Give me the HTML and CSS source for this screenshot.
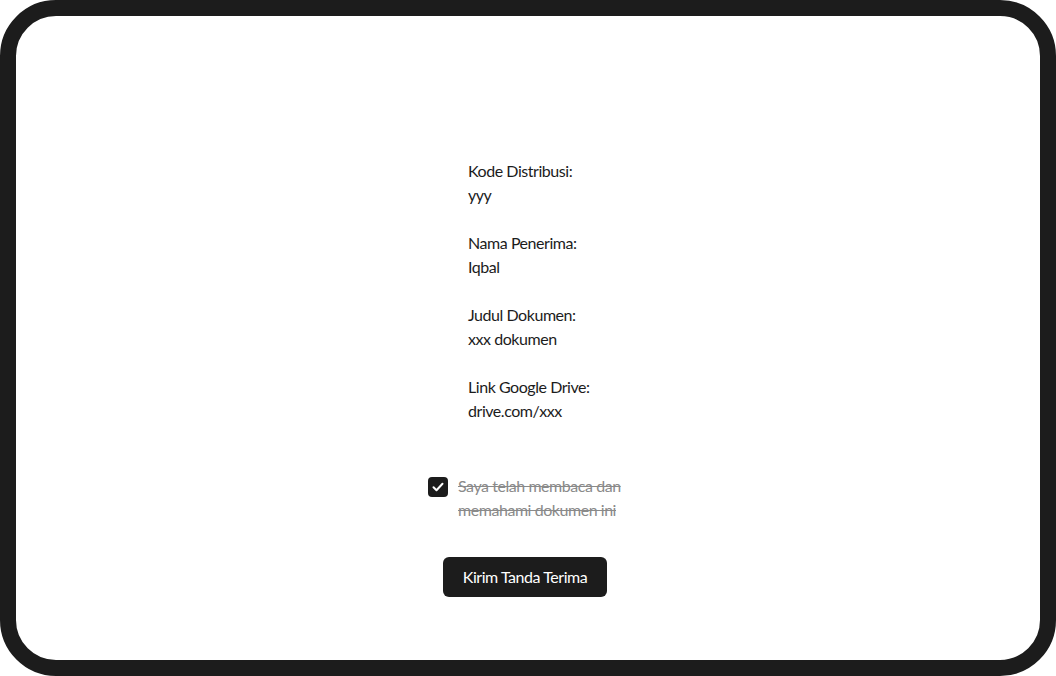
FILE: index.html
```html
<!DOCTYPE html>
<html lang="id">
<head>
<meta charset="utf-8">
<title>Tanda Terima</title>
<link rel="stylesheet" href="styles.css">
</head>
<body>
<div class="frame">
  <main class="screen">
    <section class="fields">
      <div class="field">
        <div class="label">Kode Distribusi:</div>
        <div class="value">yyy</div>
      </div>
      <div class="field">
        <div class="label">Nama Penerima:</div>
        <div class="value">Iqbal</div>
      </div>
      <div class="field">
        <div class="label">Judul Dokumen:</div>
        <div class="value">xxx dokumen</div>
      </div>
      <div class="field">
        <div class="label">Link Google Drive:</div>
        <div class="value">drive.com/xxx</div>
      </div>
    </section>
    <label class="agree">
      <span class="box"><svg viewBox="0 0 20 20" width="20" height="20"><path d="M5.5 10.3l3 3 6-6.5" fill="none" stroke="#fff" stroke-width="2" stroke-linecap="round" stroke-linejoin="round"/></svg></span>
      <span class="agree-text">Saya telah membaca dan memahami dokumen ini</span>
    </label>
    <button class="submit" type="button">Kirim Tanda Terima</button>
  </main>
</div>
</body>
</html>
```
FILE: styles.css
```css
* { box-sizing: border-box; }
html, body { margin: 0; padding: 0; background: #fff; }
body {
  font-family: "Lato", "Noto Sans", sans-serif;
  font-size: 16px;
  line-height: 24px;
  letter-spacing: -0.45px;
  color: #1c1c1c;
}
.frame {
  width: 1056px;
  height: 676px;
  border: 16px solid #1c1c1c;
  border-radius: 56px;
  background: #fff;
  overflow: hidden;
}
.screen {
  height: 100%;
  display: flex;
  flex-direction: column;
  align-items: center;
  padding-top: 143px;
}
.fields {
  display: flex;
  flex-direction: column;
  gap: 24px;
  width: 120px;
}
.label, .value { white-space: nowrap; }
.agree {
  margin-top: 51px;
  display: flex;
  gap: 10px;
  width: 200px;
  align-items: flex-start;
}
.box {
  flex: none;
  width: 20px;
  height: 20px;
  margin-top: 3px;
  border-radius: 4px;
  background: #1c1c1c;
  display: flex;
}
.agree-text {
  width: 170px;
  color: #8a8a8a;
  text-decoration: line-through;
}
.submit {
  margin-top: 35px;
  margin-right: 6px;
  height: 40px;
  width: 164px;
  padding: 0;
  border: 0;
  border-radius: 6px;
  background: #1c1c1c;
  color: #fff;
  font: inherit;
  letter-spacing: -0.45px;
}
```
